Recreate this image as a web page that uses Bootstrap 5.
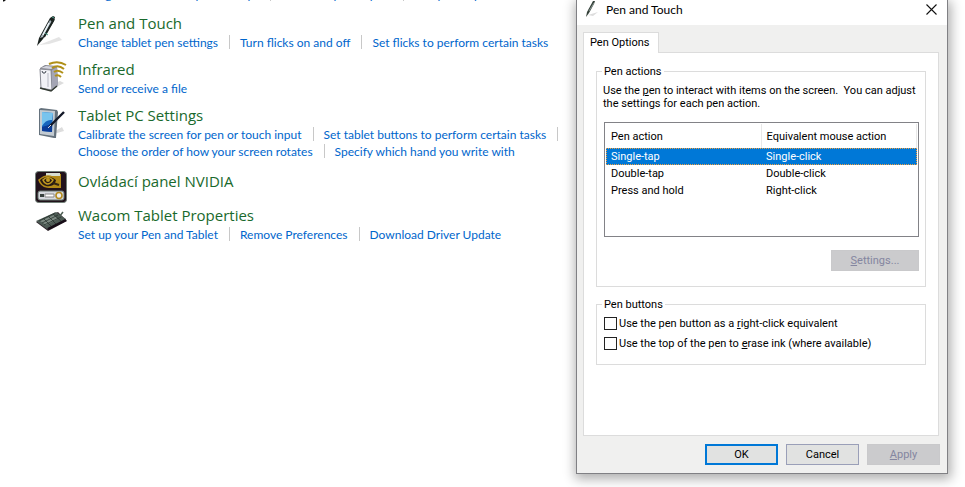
<!DOCTYPE html>
<html lang="en">
<head>
<meta charset="utf-8">
<meta name="viewport" content="width=device-width, initial-scale=1">
<title>Hardware and Sound</title>
<link rel="stylesheet" href="https://cdn.jsdelivr.net/npm/bootstrap@5.3.0/dist/css/bootstrap.min.css">
<style>
body { font: 12px/17px Lato, "Open Sans", sans-serif; color: #000; background: #fff; overflow: hidden; }
.stage { min-height: 100vh; }
.cpl { width: 570px; padding-left: 35px; }
.cpl-item { display: flex; gap: 11px; margin-bottom: 8px; }
.cpl-item > svg { flex: none; width: 32px; height: 32px; margin-top: 2px; }
.cpl-item.roomy { margin-bottom: 11px; }
.cpl-item.solo { margin-bottom: 0; }
.cpl-item.solo > svg { margin-top: 0; margin-bottom: 2px; }
.cpl h2 { font-family: "Open Sans", "Noto Sans", sans-serif; font-size: 15px; line-height: 21px; margin: 0; color: #19692c; font-weight: 400; }
.tasks { display: flex; flex-wrap: wrap; list-style: none; padding: 0; margin: 0; }
.tasks.cpl-cut { margin: -14px 0 10px 43px; }
.tasks li { display: flex; white-space: nowrap; }
.tasks a { color: #0066cc; text-decoration: none; }
.tasks a:hover { text-decoration: underline; }
.tasks li.sep::after { content: ""; width: 1px; height: 14px; margin: 1px 10px 0 11px; background: #c8c8c8; }
.edge-mark { position: absolute; left: 2px; top: 0; width: 5px; height: 2px; }

.dlg { position: absolute; top: 0; right: 17px; width: 372px; background: #f0f0ef; border: 1px solid #808084; border-top: 0; box-shadow: 1px 3px 11px 2px rgba(0,0,0,.32); font: 11px/13px Roboto, "Liberation Sans", sans-serif; }
.dlg-title { height: 25px; padding: 0 10px 7px 8px; background: #fff; font: 12px/17px Lato, "Open Sans", sans-serif; }
.dlg-title svg.pen { width: 16px; height: 18px; margin-right: 5px; }
.dlg-title button { border: 0; background: none; padding: 0; line-height: 0; }
.dlg-tabs { padding: 7px 7px 0 6px; }
.dlg-tab { position: relative; border: 1px solid #dcdcdc; border-bottom: 0; background: #fff; height: 21px; padding: 0 8px 2px 6px; margin-bottom: -1px; font-size: 11px; line-height: 17px; color: #000; display: block; }
.dlg-pane { background: #fff; border: 1px solid #dcdcdc; padding: 12px 12px 70px; margin: 0 8px 0 6px; }
.group { position: relative; border: 1px solid #dcdcdc; margin-top: 6px; padding: 12px 6px 15px 7px; min-width: 0; }
.group + .group { margin-top: 17px; padding: 12px 7px 14px; }
.group > legend { position: absolute; top: -7px; left: 5px; width: auto; float: none; margin: 0; padding: 0 2px; background: #fff; font-size: 11px; line-height: 13px; }
.group p { margin: 0 0 12px -1px; white-space: nowrap; }
.listbox { border: 1px solid #828287; height: 115px; padding: 1px; margin-bottom: 13px; }
.listbox table { width: 100%; border-collapse: collapse; table-layout: fixed; }
.listbox th { font-weight: 400; height: 24px; padding: 0 5px; border-right: 1px solid #e8e8e8; }
.listbox th:first-child { width: 155px; }
.listbox td { height: 17px; padding: 0 5px; }
.listbox tr.picked { background: #0078d7; color: #fff; outline: 1px dotted #f0a040; outline-offset: -1px; }
.push { width: 73px; height: 21px; padding: 0; border: 1px solid #9a9fb8; background: #e1e2e1; font-size: 11px; line-height: 17px; color: #000; }
.push.main { border: 2px solid #0078d7; }
.push:disabled { border-color: #c9c9cb; background: #cbcbcd; color: #8486a0; }
.push.wide { width: 88px; }
.tick { display: flex; align-items: center; gap: 2px; height: 13px; margin-bottom: 7px; }
.tick:last-child { margin-bottom: 0; }
.tick input { appearance: none; flex: none; width: 13px; height: 13px; margin: 0; border: 1px solid #222; background: #fff; }
.tick input:checked { background: #0078d7; }
.dlg-foot { display: flex; justify-content: flex-end; gap: 8px; padding: 8px 7px 8px; }
</style>
<script src="https://cdn.jsdelivr.net/npm/bootstrap@5.3.0/dist/js/bootstrap.bundle.min.js"></script>
</head>
<body>
<div class="stage position-relative overflow-hidden">
<svg class="edge-mark" viewBox="0 0 5 2" aria-hidden="true"><path d="M1 0h3L2 1.500H1z" fill="#111"/></svg>
<main class="cpl">
  <ul class="tasks cpl-cut">
    <li class="sep"><a href="#">Change when the computer sleeps</a></li>
    <li class="sep"><a href="#">Choose a power plan</a></li>
    <li><a href="#">Edit power plan</a></li>
  </ul>

  <section class="cpl-item">
    <svg viewBox="0 0 32 32" aria-hidden="true">
      <path d="M4 30 24 22 27 25 14 29z" fill="#d8d8d8" opacity=".7"/>
      <path d="M2 31 4 23 15 3 18 1 20 2 19 6 8 24z" fill="#1b2320"/>
      <path d="M5 23 15 5 17 7 8 22z" fill="#a9b5bd"/>
      <path d="M8 20 14 8" stroke="#eef4f8" stroke-width="1.5"/>
      <path d="M9 22 19 4" stroke="#1b2320" stroke-width="2"/>
      <path d="M10 18l3 2M17 2l2 1" stroke="#4aa08c"/>
    </svg>
    <div>
      <h2>Pen and Touch</h2>
      <ul class="tasks">
        <li class="sep"><a href="#">Change tablet pen settings</a></li>
        <li class="sep"><a href="#">Turn flicks on and off</a></li>
        <li><a href="#">Set flicks to perform certain tasks</a></li>
      </ul>
    </div>
  </section>

  <section class="cpl-item">
    <svg viewBox="0 0 32 32" aria-hidden="true">
      <path d="M18 28 29 22 25 20 18 23z" fill="#ddd"/>
      <path d="M5 7 10 4 22 5 23 24 17 30 6 28z" fill="#85878f"/>
      <path d="M5 8 16 9 17 29 6 27z" fill="#f1f1f6" stroke="#898b95"/>
      <path d="M17 9 22 6 23 24 17 29z" fill="#a4a5b4"/>
      <path d="M6 7 11 5 21 6 16 8z" fill="#d4d5df"/>
      <path d="M13 12v14" stroke="#b5b7c2"/><path d="M7 10l1 2h2l1-2" fill="none" stroke="#444a55"/>
      <path d="M5 27 16 30 22 25" fill="none" stroke="#333a32" stroke-width="1.5"/>
      <path d="M14 3Q23-1 31 4M17 7Q23 3 29 8M19 11Q23 8 28 12M20 15Q23 13 26 16" fill="none" stroke="#b09018" stroke-width="2"/>
    </svg>
    <div>
      <h2>Infrared</h2>
      <ul class="tasks"><li><a href="#">Send or receive a file</a></li></ul>
    </div>
  </section>

  <section class="cpl-item roomy">
    <svg viewBox="0 0 32 32" aria-hidden="true">
      <path d="M12 29 29 24 27 20 19 25z" fill="#ddd"/>
      <path d="M4 2 6 1 22 3 23 5 21 31 19 31 4 28z" fill="#65727d"/>
      <path d="M5 3 20 4 19 29 5 27z" fill="#c3cbd2"/>
      <path d="M7 5 18 6 17 25 7 24z" fill="#1765bd"/>
      <path d="M7 5 18 6 17 13Q11 12 7 19z" fill="#78c4ee"/>
      <path d="M7 20 17 17v8L7 24z" fill="#0b3c98"/>
      <path d="M15 19 29 5" stroke="#131828" stroke-width="2.4"/>
      <path d="M13 21 16 18" stroke="#d8d8d8"/>
    </svg>
    <div>
      <h2>Tablet PC Settings</h2>
      <ul class="tasks">
        <li class="sep"><a href="#">Calibrate the screen for pen or touch input</a></li>
        <li class="sep"><a href="#">Set tablet buttons to perform certain tasks</a></li>
        <li class="sep"><a href="#">Choose the order of how your screen rotates</a></li>
        <li><a href="#">Specify which hand you write with</a></li>
      </ul>
    </div>
  </section>

  <section class="cpl-item solo">
    <svg viewBox="0 0 32 32" aria-hidden="true">
      <rect x=".5" y=".5" width="31" height="31" rx="3" fill="#21121b" stroke="#718078"/>
      <path d="M11 3h15v14H14z" fill="#b28a17"/>
      <path d="M11 2h14v3H11z" fill="#d8dfd2"/>
      <path d="M4 9Q13 1 22 9 20 17 12 16 6 15 4 9z" fill="#281b14" stroke="#b48b18" stroke-width="1.6"/>
      <path d="M8 9Q13 4 18 9 16 13 12 13 9 12 8 9z" fill="none" stroke="#c29a20" stroke-width="1.6"/>
      <circle cx="13" cy="9" r="2" fill="#c29a20"/>
      <path d="M18 12 24 14" stroke="#332511" stroke-width="2"/>
      <rect x="3" y="20" width="26" height="9" rx="2" fill="#d6d9df" stroke="#67756e"/>
      <path d="M5 23h4v3H5z" fill="#38413e"/><path d="M10 23h9v3h-9z" fill="#fff" stroke="#888"/>
      <circle cx="24" cy="24.5" r="3" fill="#eee" stroke="#b58c20" stroke-width="1.6"/>
    </svg>
    <div><h2>Ovládací panel NVIDIA</h2></div>
  </section>

  <section class="cpl-item">
    <svg viewBox="0 0 32 32" aria-hidden="true">
      <path d="M1 15 23 5 32 14 13 24z" fill="#30262d"/>
      <path d="M1 14 21 5 31 12 12 22z" fill="#4e5b55"/>
      <path d="M5 14 19 8 23 12 11 18z" fill="#7d8982"/>
      <path d="M4 14 20 6M7 16 23 8M9 18 26 10M8 11 16 19M13 9 21 17M18 7 26 14" stroke="#28332e" stroke-width=".8"/>
      <path d="M13 22 31 13" stroke="#170d17" stroke-width="2.4"/>
      <path d="M24 10 28 5" stroke="#4c5d52" stroke-width="1.5"/>
    </svg>
    <div>
      <h2>Wacom Tablet Properties</h2>
      <ul class="tasks">
        <li class="sep"><a href="#">Set up your Pen and Tablet</a></li>
        <li class="sep"><a href="#">Remove Preferences</a></li>
        <li><a href="#">Download Driver Update</a></li>
      </ul>
    </div>
  </section>
</main>

<div class="dlg" role="dialog" aria-labelledby="dlgTitle">
  <div class="dlg-title d-flex align-items-center">
    <svg class="pen" viewBox="0 0 16 18" aria-hidden="true"><path d="M3 15 13 12 8 16z" fill="#ddd"/><path d="M1 17 2 12 8 1 10 1 9 4 4 13z" fill="#344139"/><path d="M4 11 9 3" stroke="#aab8b4" stroke-width=".7"/></svg>
    <span id="dlgTitle" class="flex-grow-1">Pen and Touch</span>
    <button type="button" aria-label="Close"><svg width="11" height="11" viewBox="0 0 11 11"><path d="M.5.5l10 10M10.500.5l-10 10" stroke="#111" stroke-width="1.1"/></svg></button>
  </div>
  <div class="dlg-tabs d-flex" role="tablist"><button type="button" class="dlg-tab" role="tab" aria-selected="true">Pen Options</button></div>
  <form class="m-0">
    <div class="dlg-pane" role="tabpanel">
      <fieldset class="group">
        <legend>Pen actions</legend>
        <p>Use the <u>p</u>en to interact with items on the screen.&nbsp; You can adjust<br>the settings for each pen action.</p>
        <div class="listbox">
          <table>
            <thead><tr><th>Pen action</th><th>Equivalent mouse action</th></tr></thead>
            <tbody>
              <tr class="picked"><td>Single-tap</td><td>Single-click</td></tr>
              <tr><td>Double-tap</td><td>Double-click</td></tr>
              <tr><td>Press and hold</td><td>Right-click</td></tr>
            </tbody>
          </table>
        </div>
        <div class="d-flex justify-content-end"><button type="button" class="push wide" disabled><u>S</u>ettings...</button></div>
      </fieldset>
      <fieldset class="group">
        <legend>Pen buttons</legend>
        <div class="tick"><input type="checkbox" id="rightClick"><label for="rightClick">Use the pen button as a <u>r</u>ight-click equivalent</label></div>
        <div class="tick"><input type="checkbox" id="eraseInk"><label for="eraseInk">Use the top of the pen to <u>e</u>rase ink (where available)</label></div>
      </fieldset>
    </div>
    <div class="dlg-foot">
      <button type="button" class="push main">OK</button>
      <button type="button" class="push">Cancel</button>
      <button type="button" class="push" disabled><u>A</u>pply</button>
    </div>
  </form>
</div>
</div>
</body>
</html>
